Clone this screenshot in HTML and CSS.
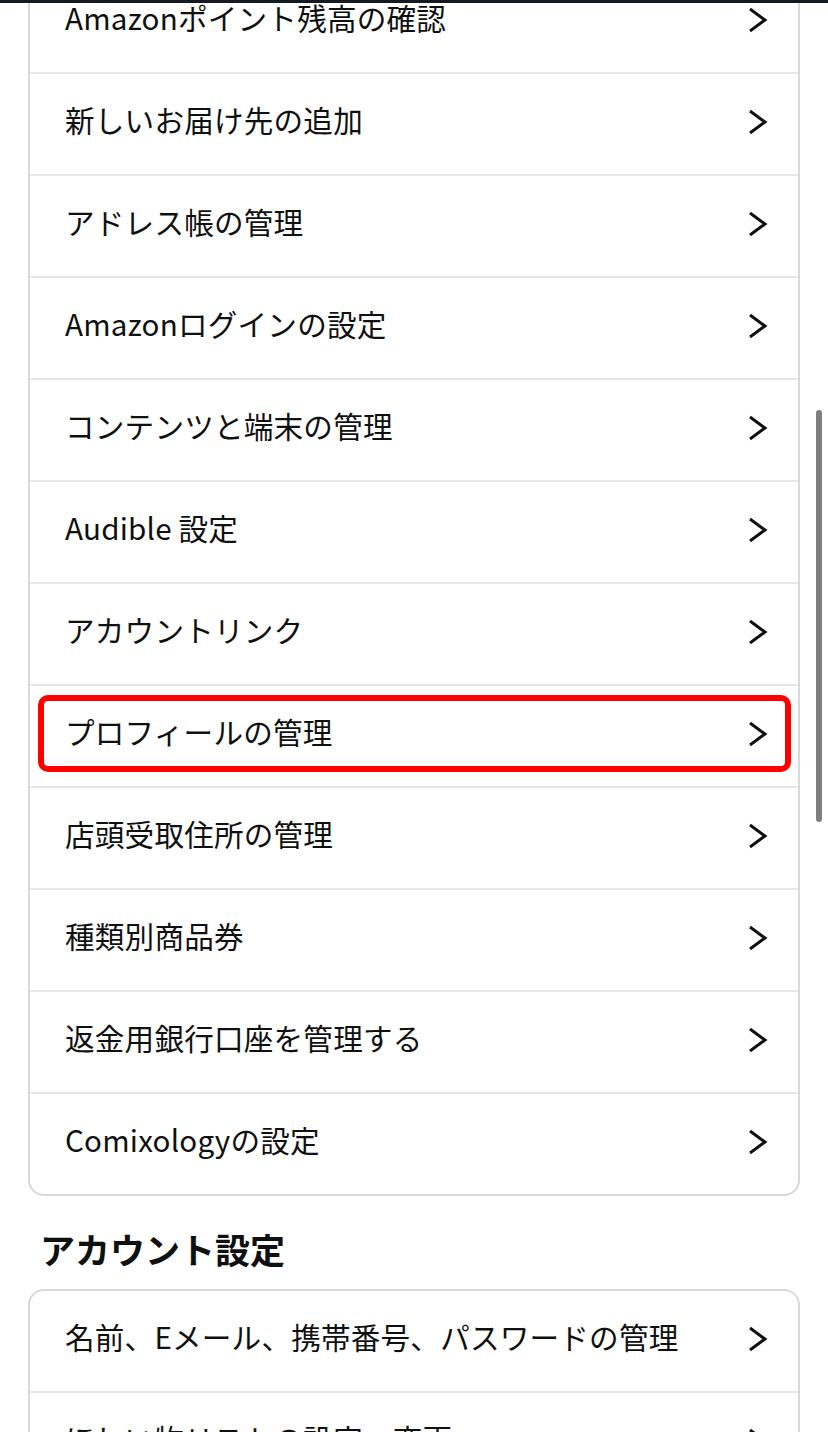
FILE: index.html
```html
<!DOCTYPE html>
<html lang="ja">
<head>
<meta charset="utf-8">
<title>アカウントサービス</title>
<link rel="stylesheet" href="styles.css">
</head>
<body>
<div class="topbar"></div>
<main class="page">
  <ul class="card">
    <li class="row"><span class="label">Amazonポイント残高の確認</span><svg class="chev" viewBox="0 0 20 26"><path d="M2 2 L17 13 L2 24"/></svg></li>
    <li class="row"><span class="label">新しいお届け先の追加</span><svg class="chev" viewBox="0 0 20 26"><path d="M2 2 L17 13 L2 24"/></svg></li>
    <li class="row"><span class="label">アドレス帳の管理</span><svg class="chev" viewBox="0 0 20 26"><path d="M2 2 L17 13 L2 24"/></svg></li>
    <li class="row"><span class="label">Amazonログインの設定</span><svg class="chev" viewBox="0 0 20 26"><path d="M2 2 L17 13 L2 24"/></svg></li>
    <li class="row"><span class="label">コンテンツと端末の管理</span><svg class="chev" viewBox="0 0 20 26"><path d="M2 2 L17 13 L2 24"/></svg></li>
    <li class="row"><span class="label">Audible 設定</span><svg class="chev" viewBox="0 0 20 26"><path d="M2 2 L17 13 L2 24"/></svg></li>
    <li class="row"><span class="label">アカウントリンク</span><svg class="chev" viewBox="0 0 20 26"><path d="M2 2 L17 13 L2 24"/></svg></li>
    <li class="row highlighted"><span class="label">プロフィールの管理</span><svg class="chev" viewBox="0 0 20 26"><path d="M2 2 L17 13 L2 24"/></svg><span class="mark"></span></li>
    <li class="row"><span class="label">店頭受取住所の管理</span><svg class="chev" viewBox="0 0 20 26"><path d="M2 2 L17 13 L2 24"/></svg></li>
    <li class="row"><span class="label">種類別商品券</span><svg class="chev" viewBox="0 0 20 26"><path d="M2 2 L17 13 L2 24"/></svg></li>
    <li class="row"><span class="label">返金用銀行口座を管理する</span><svg class="chev" viewBox="0 0 20 26"><path d="M2 2 L17 13 L2 24"/></svg></li>
    <li class="row"><span class="label">Comixologyの設定</span><svg class="chev" viewBox="0 0 20 26"><path d="M2 2 L17 13 L2 24"/></svg></li>
  </ul>

  <h2 class="section-title">アカウント設定</h2>

  <ul class="card">
    <li class="row"><span class="label">名前、Eメール、携帯番号、パスワードの管理</span><svg class="chev" viewBox="0 0 20 26"><path d="M2 2 L17 13 L2 24"/></svg></li>
    <li class="row"><span class="label">ほしい物リストの設定・変更</span><svg class="chev" viewBox="0 0 20 26"><path d="M2 2 L17 13 L2 24"/></svg></li>
  </ul>
</main>
<div class="scrollbar"></div>
</body>
</html>
```

FILE: styles.css
```css
* { box-sizing: border-box; }

html, body {
  margin: 0;
  padding: 0;
  background: #ffffff;
  overflow: hidden;
}

body {
  font-family: "Noto Sans CJK JP", "Noto Sans", sans-serif;
  color: #0f1111;
  height: 1432px;
}

.topbar {
  position: fixed;
  top: 0;
  left: 0;
  right: 0;
  height: 3px;
  background: #131a22;
  z-index: 5;
}

.page {
  margin-top: -30px;
  padding: 0 28px;
}

.card {
  list-style: none;
  margin: 0;
  padding: 0;
  border: 2px solid #d5d9d9;
  border-radius: 16px;
  background: #fff;
}

.row {
  position: relative;
  display: flex;
  align-items: center;
  justify-content: space-between;
  height: 102px;
  padding: 0 30px 0 35px;
  border-top: 2px solid #e7e7e7;
  font-size: 29.6px;
  line-height: 1;
}

.row:first-child {
  height: 100px;
  border-top: none;
}

.label {
  display: block;
  padding-bottom: 9px;
  letter-spacing: 0.2px;
}

.chev {
  width: 20px;
  height: 26px;
  flex: none;
  margin-bottom: 4px;
}

.chev path {
  fill: none;
  stroke: #0f1111;
  stroke-width: 3;
  stroke-linecap: butt;
  stroke-linejoin: miter;
}

.mark {
  position: absolute;
  left: 8px;
  right: 7px;
  top: 9px;
  bottom: 14px;
  border: 6px solid #ff0000;
  border-radius: 10px;
  pointer-events: none;
}

.section-title {
  margin: 31px 0 18px 12px;
  font-size: 35px;
  line-height: 44px;
  font-weight: 700;
  color: #0f1111;
}

.scrollbar {
  position: fixed;
  left: 816px;
  top: 410px;
  width: 6px;
  height: 412px;
  border-radius: 3px;
  background: #7f7f7f;
}
```
